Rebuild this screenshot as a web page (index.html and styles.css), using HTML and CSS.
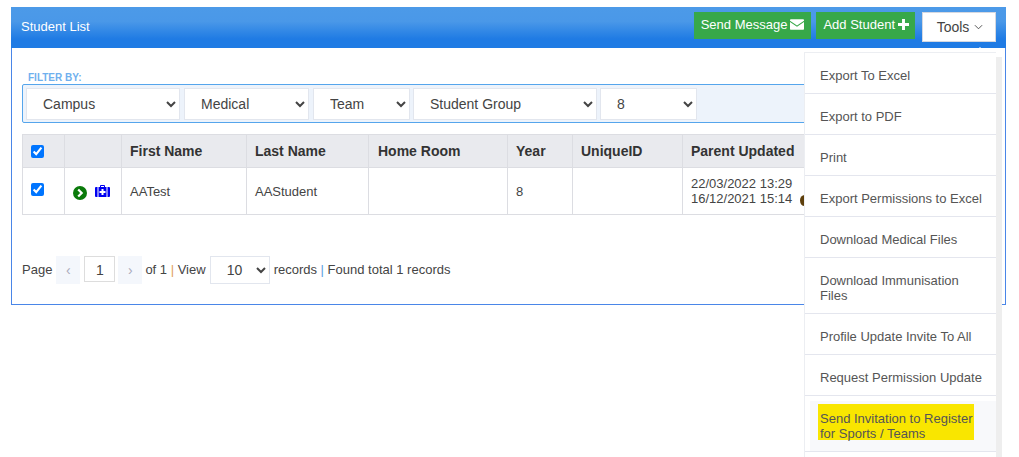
FILE: index.html
```html
<!DOCTYPE html>
<html lang="en">
<head>
<meta charset="utf-8">
<title>Student List</title>
<link rel="stylesheet" href="styles.css">
</head>
<body>
<section class="panel">
  <header class="panel-head">
    <h1 class="panel-title">Student List</h1>
    <div class="actions">
      <button class="btn-green" type="button">Send Message
        <svg class="btn-icon" viewBox="0 0 16 12" width="14" height="11"><path d="M0 1.2C0 .5.5 0 1.2 0h13.6c.7 0 1.2.5 1.2 1.2v.4L8 7 0 1.6z" fill="currentColor"/><path d="M0 3.2V10.800c0 .7.5 1.200 1.200 1.200h13.600c.7 0 1.200-.5 1.200-1.200V3.200L8 8.600z" fill="currentColor"/></svg>
      </button>
      <button class="btn-green btn-add" type="button">Add Student
        <svg class="btn-icon" viewBox="0 0 12 12" width="11" height="11"><path d="M4.400 0h3.200v4.400H12v3.200H7.600V12H4.400V7.600H0V4.400h4.400z" fill="currentColor"/></svg>
      </button>
      <div class="tools">
        <button class="btn-tools" type="button">Tools
          <svg viewBox="0 0 10 6" width="9" height="6"><path d="M1 1l4 4 4-4" fill="none" stroke="currentColor" stroke-width="1"/></svg>
        </button>
        <span class="nub"></span>
        <ul class="menu">
          <li>Export To Excel</li>
          <li>Export to PDF</li>
          <li>Print</li>
          <li>Export Permissions to Excel</li>
          <li>Download Medical Files</li>
          <li>Download Immunisation Files</li>
          <li>Profile Update Invite To All</li>
          <li>Request Permission Update</li>
          <li class="menu-active"><div class="menu-active-inner"><mark class="hl">Send Invitation to Register for Sports / Teams</mark></div></li>
        </ul>
      </div>
    </div>
  </header>
  <div class="panel-body">
    <div class="filter-label">FILTER BY:</div>
    <div class="filters">
      <select class="sel sel-campus"><option>Campus</option></select>
      <select class="sel sel-medical"><option>Medical</option></select>
      <select class="sel sel-team"><option>Team</option></select>
      <select class="sel sel-group"><option>Student Group</option></select>
      <select class="sel sel-year"><option>8</option></select>
    </div>
    <table class="grid">
      <colgroup>
        <col class="c1"><col class="c2"><col class="c3"><col class="c4"><col class="c5"><col class="c6"><col class="c7"><col class="c8">
      </colgroup>
      <thead>
        <tr>
          <th><input type="checkbox" checked></th>
          <th></th>
          <th>First Name</th>
          <th>Last Name</th>
          <th class="th-home">Home Room</th>
          <th>Year</th>
          <th>UniqueID</th>
          <th>Parent Updated</th>
        </tr>
      </thead>
      <tbody>
        <tr>
          <td class="cell-check"><input type="checkbox" checked></td>
          <td class="cell-icons">
            <svg viewBox="0 0 14 14" width="14" height="14"><circle cx="7" cy="7" r="7" fill="#0a7a0a"/><path d="M5.200 3.500L8.700 7l-3.500 3.500" fill="none" stroke="#fff" stroke-width="2.200"/></svg>
            <svg class="icon-case" viewBox="0 0 15 12" width="15" height="12"><path d="M5 2V1q0-1 1-1h3q1 0 1 1v1h4q1 0 1 1v8q0 1-1 1H1q-1 0-1-1V3q0-1 1-1zM6 1v1h3V1z" fill="#0000f0"/><path d="M6.500 4h2v2h2v2h-2v2h-2V8h-2V6h2z" fill="#fff"/><path d="M2.500 2h1v10h-1zM11.500 2h1v10h-1z" fill="#fff"/></svg>
          </td>
          <td>AATest</td>
          <td>AAStudent</td>
          <td></td>
          <td>8</td>
          <td></td>
          <td class="cell-dates">22/03/2022 13:29<br>16/12/2021 15:14 <span class="dot"></span></td>
        </tr>
      </tbody>
    </table>
    <div class="pager">
      <span class="pg-text">Page</span>
      <button class="pg-btn" type="button">&lsaquo;</button>
      <input class="pg-input" type="text" value="1">
      <button class="pg-btn pg-next" type="button">&rsaquo;</button>
      <span class="pg-text">of 1 <span class="sep-o">|</span> View</span>
      <select class="sel sel-view"><option>10</option></select>
      <span class="pg-text">records <span class="sep-b">|</span> Found total 1 records</span>
    </div>
  </div>
</section>
</body>
</html>
```

FILE: styles.css
```css
* { box-sizing: border-box; }
html, body { margin: 0; height: 457px; overflow: hidden; background: #fff; }
body { font-family: "Liberation Sans", Arial, sans-serif; color: #444; padding: 7px 13px 0 11px; }

.panel { width: 995px; height: 298px; border: 1px solid #4a86e8; border-top: 0; }
.panel-head {
  height: 41px; margin: 0 -1px; padding: 5px 10px 0 10px;
  display: flex; justify-content: space-between; align-items: flex-start;
  background: linear-gradient(to bottom, #4c9ae8 0%, #4a98e8 35%, #1f7be4 78%, #1f7be4 100%);
}
.panel-title { margin: 7px 0 0; font-size: 13px; font-weight: 400; color: #fff; line-height: 16px; }
.actions { display: flex; align-items: flex-start; gap: 5px; }
.btn-green {
  height: 27px; padding: 0 7px 2px; border: 0; background: #37a849; color: #fff;
  font: 13px/16px "Liberation Sans", Arial, sans-serif;
  display: flex; align-items: center; gap: 3px;
}
.btn-add { padding-right: 6px; }
.btn-icon { display: block; }
.tools { position: relative; margin-left: 2px; }
.btn-tools {
  width: 74px; height: 30px; padding: 0 0 0 2px; background: #fff; border: 1px solid #d5d8e0; color: #444;
  font: 14px/16px "Liberation Sans", Arial, sans-serif;
  display: flex; align-items: center; justify-content: center; gap: 5px;
}
.nub {
  position: absolute; right: 11px; top: 35px; width: 0; height: 0;
  border: 5px solid transparent; border-top: 0; border-bottom-color: #fff; z-index: 3;
}
.menu {
  position: absolute; right: 0; top: 40px; width: 192px; height: 405px; margin: 0; padding: 0;
  list-style: none; background: #fff; border-left: 1px solid #eceef2; border-top: 1px solid #eceef2;
  box-shadow: 6px 5px 0 #eee; z-index: 2; font-size: 13px; line-height: 15px;
}
.menu li { padding: 15px 10px 10px 15px; border-bottom: 1px solid #e4e6ee; color: #555; }
.menu .menu-active { padding: 5px 0 0 5px; }
.menu-active-inner { background: #f8f9fb; padding: 3px 20px 11px 8px; }
.hl { background: #f9e600; color: #555; display: block; width: 156px; height: 36px; padding: 7px 0 0 2px; line-height: 15px; }

.panel-body { padding: 24px 10px 0 10px; }
.filter-label { font-size: 10px; font-weight: 700; color: #6fb0ee; line-height: 11px; padding-left: 6px; margin-bottom: 1px; }
.filters {
  height: 39px; padding: 3px; display: flex; gap: 4px; align-items: flex-start;
  border: 1px solid #55a5ec; border-radius: 2px; background: #edf3fb;
}
.sel {
  height: 32px; background-color: #fff; border: 1px solid #e2e6ee; color: #444;
  font: 14px "Liberation Sans", Arial, sans-serif; padding: 0 0 0 12px;
}
.sel-campus { width: 154px; }
.sel-medical { width: 125px; }
.sel-team { width: 97px; }
.sel-group { width: 184px; margin-left: -1px; }
.sel-year { width: 97px; margin-left: -1px; }

.grid { margin-top: 11px; width: 974px; border-collapse: collapse; table-layout: fixed; font-size: 13px; }
.c1 { width: 42px; } .c2 { width: 57px; } .c3 { width: 125px; } .c4 { width: 122px; }
.c5 { width: 139px; } .c6 { width: 65px; } .c7 { width: 110px; }
.grid th, .grid td { border: 1px solid #dcdde2; padding: 0 8px; text-align: left; }
.grid th { height: 33px; background: #e9eaee; font-size: 14px; color: #333; }
.grid .th-home { padding-left: 9px; }
.grid td { height: 47px; font-size: 13px; color: #444; line-height: 15px; }
.grid input { margin: 0; display: block; }
.cell-check { vertical-align: top; padding-top: 15px !important; }
.cell-icons { white-space: nowrap; padding-top: 2px !important; }
.cell-icons svg { vertical-align: middle; margin-right: 4px; }
.cell-icons .icon-case { margin-bottom: 3px; }
.cell-dates { white-space: nowrap; overflow: hidden; }
.dot { display: inline-block; width: 9px; height: 11px; border-radius: 50%; background: #5e3f0c; vertical-align: -3px; margin-left: 4px; }

.pager { margin-top: 41px; display: flex; align-items: center; gap: 4px; font-size: 13px; color: #444; }
.pg-text { margin-bottom: 2px; }
.pg-btn { width: 24px; height: 28px; border: 0; background: #f4f7fc; color: #aab; font-size: 14px; padding: 0; }
.pg-next { margin-left: -1px; margin-right: -1px; }
.pg-input { width: 31px; height: 26px; margin-bottom: 2px; border: 1px solid #ddd; text-align: center; font: 14px "Liberation Sans", Arial, sans-serif; color: #444; padding: 1px 0 0; }
.sel-view { width: 60px; height: 28px; }
.sep-o { color: #e0a060; }
.sep-b { color: #5aa0e0; }
```
